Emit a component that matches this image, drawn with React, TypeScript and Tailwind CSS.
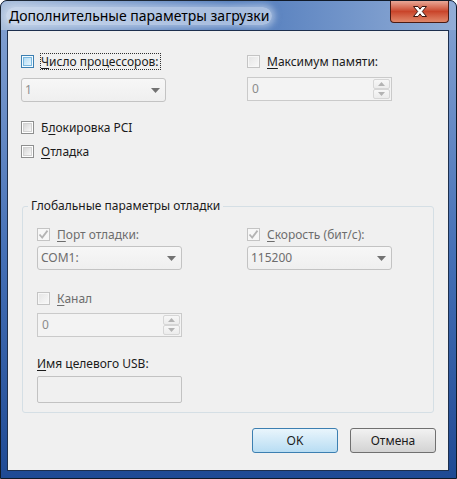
import React from "react";

type BoxState = "normal" | "hover" | "disabled" | "checked";

function CheckBox({ state = "normal" }: { state?: BoxState }) {
  if (state === "hover") {
    return (
      <span className="flex h-[13px] w-[13px] shrink-0 items-center justify-center border border-[#3c7fb1] bg-[#f4fbff]">
        <span className="h-[9px] w-[9px] border border-[#79b8e0] bg-linear-to-br from-[#b3dcf4] to-[#e6f5fd]" />
      </span>
    );
  }
  if (state === "checked") {
    return (
      <span className="flex h-[13px] w-[13px] shrink-0 items-center justify-center border border-[#c4c4c4] bg-[#f7f7f7]">
        <svg width="11" height="11" viewBox="0 0 11 11">
          <path d="M1.5 5.5 L4.2 8.6 L9.5 1.6" fill="none" stroke="#b4b4b4" strokeWidth="1.8" />
        </svg>
      </span>
    );
  }
  if (state === "disabled") {
    return (
      <span className="flex h-[13px] w-[13px] shrink-0 items-center justify-center border border-[#c4c4c4] bg-[#f7f7f7]">
        <span className="h-[9px] w-[9px] bg-linear-to-br from-[#e6e6e6] to-[#f7f7f7]" />
      </span>
    );
  }
  return (
    <span className="flex h-[13px] w-[13px] shrink-0 items-center justify-center border border-[#8e8f8f] bg-white">
      <span className="h-[9px] w-[9px] border border-[#d2d2d2] bg-linear-to-br from-[#d6d6d6] to-[#f8f8f8]" />
    </span>
  );
}

function CheckRow({
  state,
  pre = "",
  keyChar,
  rest,
  focus,
  grey,
}: {
  state?: BoxState;
  pre?: string;
  keyChar: string;
  rest: string;
  focus?: boolean;
  grey?: boolean;
}) {
  return (
    <div className="flex h-[17px] items-center gap-[6px]">
      <CheckBox state={state} />
      <span
        className={`border pr-[1px] leading-[15px] ${focus ? "border-dotted border-[#303030]" : "border-transparent"} ${grey ? "text-[#6d6d6d]" : "text-[#1b1b1b]"}`}
      >
        {pre}
        <span className="underline decoration-1 underline-offset-[2px]">{keyChar}</span>
        {rest}
      </span>
    </div>
  );
}

function Combo({ value, tone }: { value: string; tone: string }) {
  return (
    <div className="flex h-[24px] w-[145px] items-center justify-between rounded-[3px] border border-[#c3c3c3] bg-linear-to-b from-[#f7f7f7] to-[#efefef] pl-[3px] pr-[5px]">
      <span className={tone}>{value}</span>
      <svg width="9" height="5" viewBox="0 0 9 5">
        <path d="M0 0H9L4.5 5Z" fill="#727272" />
      </svg>
    </div>
  );
}

function SpinArrow({ up }: { up?: boolean }) {
  return (
    <div className="flex flex-1 items-center justify-center rounded-[2px] border border-[#d6d6d6] bg-linear-to-b from-[#f7f7f7] to-[#ececec]">
      <svg width="7" height="4" viewBox="0 0 7 4">
        <path d={up ? "M0 4H7L3.5 0Z" : "M0 0H7L3.5 4Z"} fill="#b3b3b3" />
      </svg>
    </div>
  );
}

function Spin({ value }: { value: string }) {
  return (
    <div className="flex h-[24px] w-[145px] items-stretch border border-[#cacaca] bg-[#f3f3f3] py-[1px] pr-[1px]">
      <span className="flex-1 pl-[4px] leading-[20px] text-[#8b8b8b]">{value}</span>
      <div className="flex w-[17px] flex-col">
        <SpinArrow up />
        <SpinArrow />
      </div>
    </div>
  );
}

export default function App() {
  return (
    <div className="h-[479px] w-[457px] bg-white font-['Noto_Sans',sans-serif] text-[12px] leading-[16px]">
      <div className="flex h-full w-full flex-col rounded-t-[7px] border border-[#101a28] bg-[#2a4f95]">
        {/* title bar */}
        <div className="flex h-[29px] items-start justify-between rounded-t-[6px] bg-linear-to-r from-[#a9bedb] via-[#4f7abb] to-[#92add6]">
          <span className="ml-[5px] mt-[6px] rounded-[9px] bg-[rgba(225,234,246,0.6)] px-[3px] text-[14px] leading-[18px] text-[#000000] shadow-[0_0_6px_3px_rgba(225,234,246,0.5)]">
            Дополнительные параметры загрузки
          </span>
          <div className="mr-[7px] flex h-[22px] w-[59px] items-center justify-center rounded-b-[4px] border border-t-0 border-[#4a1b14] bg-linear-to-b from-[#e8a797] via-[#c9442a] to-[#e0876a]">
            <svg width="18" height="13" viewBox="0 0 18 13">
              <path
                d="M2.5 1.5H7L9 4.2L11 1.5H15.5L11.3 6.5L15.5 11.5H11L9 8.8L7 11.5H2.5L6.7 6.5Z"
                fill="#ffffff"
                stroke="#3b1510"
                strokeWidth="1"
                strokeLinejoin="round"
              />
            </svg>
          </div>
        </div>

        {/* frame around the client area */}
        <div className="flex flex-1 flex-col bg-linear-to-b from-[#7f9ed0] via-[#4570b6] to-[#1f4a94] pb-[7px] pl-[6px] pr-[7px]">
          <div className="flex-1 border border-[#1d2f4d] bg-[#f0f0f0] text-[#1b1b1b]">
            <div className="flex pl-[13px] pt-[22px]">
              <div className="flex w-[226px] flex-col">
                <CheckRow state="hover" keyChar="Ч" rest="исло процессоров:" focus />
                <div className="mt-[8px]">
                  <Combo value="1" tone="text-[#8f8f8f]" />
                </div>
                <div className="mt-[17px]">
                  <CheckRow pre="Б" keyChar="л" rest="окировка PCI" />
                </div>
                <div className="mt-[7px]">
                  <CheckRow keyChar="О" rest="тладка" />
                </div>
              </div>
              <div className="flex flex-col">
                <CheckRow state="disabled" keyChar="М" rest="аксимум памяти:" />
                <div className="mt-[7px]">
                  <Spin value="0" />
                </div>
              </div>
            </div>

            {/* group box */}
            <div className="mx-[14px] mt-[46px] rounded-[3px] border border-[#d5dfe5] pb-[9px] pl-[14px] pr-[14px]">
              <div className="-ml-[9px] -mt-[9px] w-fit bg-[#f0f0f0] px-[3px]">
                Глобальные параметры отладки
              </div>
              <div className="mt-[12px] flex">
                <div className="flex w-[210px] flex-col">
                  <CheckRow state="checked" keyChar="П" rest="орт отладки:" grey />
                  <div className="mt-[3px]">
                    <Combo value="COM1:" tone="text-[#6d6d6d]" />
                  </div>
                  <div className="mt-[20px]">
                    <CheckRow state="disabled" keyChar="К" rest="анал" grey />
                  </div>
                  <div className="mt-[6px]">
                    <Spin value="0" />
                  </div>
                  <div className="mt-[19px]">
                    <span className="underline decoration-1 underline-offset-[2px]">И</span>
                    мя целевого USB:
                  </div>
                  <div className="mt-[4px] h-[27px] w-[145px] rounded-[2px] border border-[#c2c2c2] bg-[#f0f0f0]" />
                </div>
                <div className="flex flex-col">
                  <CheckRow state="checked" keyChar="С" rest="корость (бит/с):" grey />
                  <div className="mt-[3px]">
                    <Combo value="115200" tone="text-[#6d6d6d]" />
                  </div>
                </div>
              </div>
            </div>

            {/* buttons */}
            <div className="mt-[15px] flex justify-end gap-[12px] pr-[12px]">
              <button className="h-[25px] w-[86px] rounded-[3px] border border-[#3c7fb1] bg-linear-to-b from-[#e9f5fc] to-[#b8ddf3]">
                OK
              </button>
              <button className="h-[25px] w-[86px] rounded-[3px] border border-[#707070] bg-linear-to-b from-[#f2f2f2] to-[#d3d3d3]">
                Отмена
              </button>
            </div>
          </div>
        </div>
      </div>
    </div>
  );
}
